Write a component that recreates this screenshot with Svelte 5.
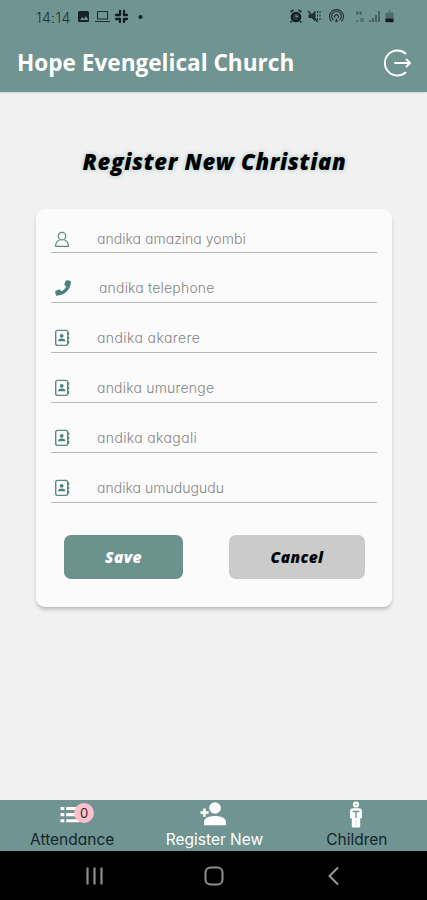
<script>
  const fields = [
    { icon: 'user', hint: 'andika amazina yombi', spacing: 0.03 },
    { icon: 'phone', hint: 'andika telephone', spacing: 0.18 },
    { icon: 'book', hint: 'andika akarere', spacing: 0.4 },
    { icon: 'book', hint: 'andika umurenge', spacing: 0.2 },
    { icon: 'book', hint: 'andika akagali', spacing: 0.36 },
    { icon: 'book', hint: 'andika umudugudu', spacing: 0.03 }
  ];
</script>

<div class="screen">
  <div class="status">
    <span class="time">14:14</span>
    <svg width="70" height="16" viewBox="0 0 70 16" fill="none" stroke="#1c3033">
      <rect x="1" y="3" width="11" height="11" rx="1.5" fill="#142326" stroke="none" />
      <path d="M3 12l2.300-3 1.700 2 2-3 2.300 4z" fill="#6f9491" stroke="none" />
      <path d="M20.500 3.500h10v7.500h-10zM18 13.500h15" stroke-width="1.100" />
      <path d="M43 3v4M47 3v4M39 7h4M47 7h3M39 11h4M47 11h3M43 11v3M47 11v3" stroke="#101d20" stroke-width="2.300" stroke-linecap="round" />
      <circle cx="63.500" cy="9" r="2.100" fill="#142326" stroke="none" />
    </svg>
    <svg class="right" width="107" height="16" viewBox="0 0 107 16" fill="none" stroke="#1c3033">
      <circle cx="7" cy="9" r="4.300" fill="#24383a" stroke="#101d20" stroke-width="2" />
      <path d="M1.500 4l3-2M12.500 4l-3-2M3 13l-1.500 1.500M11 13l1.500 1.500" stroke-width="1.700" />
      <path d="M7 6.500V9l2.500-1" stroke="#6f9491" />
      <path d="M19.500 6.500h3l4-4v11l-4-3.500h-3z" fill="#1c3033" stroke="none" />
      <path d="M19 3l10 11" stroke-width="1.300" />
      <path d="M28.500 3v10M31 3v10" stroke-dasharray="2 1.500" />
      <path d="M42.500 13.500a7 7 0 1 1 10 0M44.500 12a4.800 4.800 0 1 1 6 0M46 10a2 2 0 1 1 3 0" stroke-width="1.100" />
      <path d="M46 14l1.500-4 1.500 4z" fill="#1c3033" stroke="none" />
      <path d="M68 3v4M72 3v4M68 5h4M68 12v2M72 10v4M74 10v4" opacity=".65" />
      <path d="M81 14v-2M84 14v-4M87 14V7M90 14V3" stroke-width="1.300" opacity=".75" />
      <path d="M97 5h7v9h-7zM99 3h3" fill="#4c6c6b" stroke="#4c6c6b" />
      <path d="M96.500 10.500h8V14h-8z" fill="#101d20" stroke="none" />
    </svg>
  </div>

  <header>
    <h1>Hope Evengelical Church</h1>
    <svg width="30" height="30" viewBox="0 0 30 30" fill="none" stroke="#fff" stroke-width="1.900" stroke-linecap="round" stroke-linejoin="round">
      <path d="M22.500 5.500A12.500 12.500 0 1 0 22.500 24.500M12 15h15M23.500 11.500l3.500 3.500-3.500 3.500" />
    </svg>
  </header>

  <main>
    <h2>Register New Christian</h2>
    <section class="card">
      {#each fields as f}
        <div class="field" class:first={f.icon === 'user'}>
          {#if f.icon === 'user'}
            <svg width="16" height="17" viewBox="0 0 16 18" fill="none" stroke="#5a8a84" stroke-width="1.300">
              <circle cx="8" cy="5.500" r="4" />
              <path d="M5.500 9.500C2.500 10.500 1.200 12.500 1.200 16.200h13.600c0-3.700-1.300-5.700-4.300-6.700" stroke-linejoin="round" />
            </svg>
          {:else if f.icon === 'phone'}
            <svg width="18" height="18" viewBox="0 0 18 18" fill="#4d827c">
              <path d="M12.800 1.200l3.300.6c.5.100.8.500.8 1C16.900 10.500 10.500 16.700 2.800 16.700c-.5 0-.9-.3-1-.8l-.6-3c-.1-.5.100-.9.600-1.100l3.200-1.300c.4-.2.800-.1 1.100.3l1.300 1.500c2.200-1 3.900-2.700 4.800-4.800l-1.500-1.300c-.3-.3-.4-.7-.3-1.100l1.300-3.400c.2-.4.600-.6 1.100-.5z" />
            </svg>
          {:else}
            <svg width="16" height="18" viewBox="0 0 16 18" fill="#4d827c">
              <rect x="1.700" y="1.400" width="12" height="15" rx="1.800" fill="none" stroke="#5a8a84" stroke-width="1.400" />
              <path d="M13.500 3.500h1.700v2.500h-1.700zM13.500 7.700h1.700v2.500h-1.700zM13.500 12h1.700v2.500h-1.700z" />
              <circle cx="7.700" cy="6.800" r="1.900" />
              <path d="M4 12.300c0-2 1.200-2.800 3.700-2.800s3.700.8 3.700 2.800z" />
            </svg>
          {/if}
          <span style:letter-spacing="{f.spacing}px">{f.hint}</span>
        </div>
      {/each}
      <div class="actions">
        <button class="save">Save</button>
        <button class="cancel">Cancel</button>
      </div>
    </section>
  </main>

  <nav>
    <div class="tab att">
      <div class="ico">
        <svg width="20" height="17" viewBox="0 0 20 18" fill="#fff">
          <path d="M0 1h4v3.300H0zM0 7.500h4v3.300H0zM0 14h4v3.300H0zM6 1h14v3.300H6zM6 7.500h14v3.300H6zM6 14h14v3.300H6z" />
        </svg>
        <b class="badge">0</b>
      </div>
      <span>Attendance</span>
    </div>
    <div class="tab reg">
      <div class="ico">
        <svg width="26" height="24" viewBox="0 0 26 24" fill="#fff">
          <circle cx="15" cy="6" r="5.800" />
          <path d="M4 23.300V20c0-4 5-6 11-6s11 2 11 6v3.300zM3.200 6.500h2.600v2.800h2.800v2.600H5.800v2.800H3.200v-2.800H.500V9.300h2.700z" />
        </svg>
      </div>
      <span>Register New</span>
    </div>
    <div class="tab chi">
      <div class="ico">
        <svg width="14" height="27" viewBox="0 0 14 27" fill="#fff">
          <circle cx="7" cy="3.500" r="3.100" />
          <path d="M4 7.200h6c2 0 3 1.200 3 3v5.800c0 1.300-1 1.600-1.800 1.600V25c0 1-.6 1.500-1.500 1.500H4.300c-.9 0-1.500-.5-1.500-1.500v-7.400C2 17.600 1 17.300 1 16v-5.800c0-1.800 1-3 3-3z" />
          <path d="M3.500 10.500h7M7 10.500v6.500" fill="none" stroke="#6f9491" stroke-width="1.300" />
          <path d="M7 19v6" stroke="#c3d2d0" stroke-width=".8" />
          <circle cx="7" cy="3.500" r="1" fill="#8daeab" />
        </svg>
      </div>
      <span>Children</span>
    </div>
  </nav>

  <div class="system">
    <svg width="20" height="20" viewBox="0 0 20 20" stroke="#8d8d8d" stroke-width="2.200"><path d="M3.500 1.500v17M10.500 1.500v17M17.500 1.500v17" /></svg>
    <svg width="20" height="20" viewBox="0 0 20 20" fill="none" stroke="#8f8f8f" stroke-width="2"><rect x="1.500" y="1.500" width="17" height="17" rx="5" /></svg>
    <svg width="20" height="20" viewBox="0 0 20 20" fill="none" stroke="#999" stroke-width="2"><path d="M14 1.500L5.500 10l8.500 8.500" /></svg>
  </div>
</div>

<style>
  :global(body) { margin: 0; }
  .screen {
    width: 427px;
    height: 900px;
    display: flex;
    flex-direction: column;
    background: #f1f1f1;
    font-family: "Open Sans", "Noto Sans", sans-serif;
    overflow: hidden;
  }
  svg { display: block; flex: none; }
  .status {
    height: 34px;
    box-sizing: border-box;
    padding: 8px 31px 0 36px;
    display: flex;
    background: #6f9491;
  }
  .time {
    width: 41px;
    font: 300 14px/19px Inter, sans-serif;
    letter-spacing: 0.4px;
    color: #1c3033;
  }
  .right { margin-left: auto; }
  header {
    height: 58px;
    box-sizing: border-box;
    padding: 0 14px 0 17px;
    display: flex;
    align-items: center;
    justify-content: space-between;
    background: #6f9491;
    box-shadow: 0 1px 2px rgba(0, 0, 0, 0.12);
  }
  h1 {
    margin: 0;
    font-size: 22.600px;
    line-height: 30px;
    font-weight: 700;
    color: #fff;
    white-space: nowrap;
  }
  main { flex: 1; }
  h2 {
    margin: 53px 0 0;
    text-align: center;
    font-size: 22px;
    line-height: 32px;
    font-weight: 800;
    font-style: italic;
    letter-spacing: 0.65px;
    text-indent: 2px;
    color: #000;
    white-space: nowrap;
    text-shadow: 0 0 5px #9fc2bd;
  }
  .card {
    width: 356px;
    height: 398px;
    box-sizing: border-box;
    margin: 32px 0 0 36px;
    padding: 0 15px;
    border-radius: 9px;
    background: #fbfbfb;
    box-shadow: 0 3px 4px -1px rgba(0, 0, 0, 0.26);
  }
  .field {
    height: 50px;
    box-sizing: border-box;
    border-bottom: 1px solid #b8b8b8;
    display: flex;
    align-items: flex-end;
    padding: 0 0 5px 3px;
    gap: 27px;
  }
  .field.first { height: 44px; padding-bottom: 4px; }
  .field span {
    font: 300 14px/18px Inter, sans-serif;
    font-feature-settings: "cv11";
    color: #858585;
    white-space: nowrap;
  }
  .actions {
    display: flex;
    justify-content: space-between;
    padding: 32px 12px 0 13px;
  }
  button {
    height: 44px;
    border: 0;
    border-radius: 7px;
    padding: 0;
    font: italic 800 15.500px/20px "Open Sans", sans-serif;
    letter-spacing: 0.4px;
  }
  .save { width: 119px; background: #6b928d; color: #fff; }
  .cancel { width: 136px; background: #cbcbcb; color: #000; }
  nav {
    height: 51px;
    display: flex;
    background: #6f9491;
  }
  .tab {
    width: 33.333%;
    display: flex;
    flex-direction: column;
    align-items: center;
  }
  .ico {
    position: relative;
    height: 28px;
    display: flex;
    align-items: center;
  }
  .tab span {
    font: 400 15.500px/23px Inter, sans-serif;
    font-feature-settings: "cv11";
    color: #14262a;
    white-space: nowrap;
    padding-left: 2px;
  }
  .reg span { color: #fff; }
  .att .ico { margin-left: -2px; }
  .badge {
    position: absolute;
    left: 14px;
    top: 3px;
    width: 20px;
    height: 20px;
    border-radius: 50%;
    background: #ffc0cb;
    text-align: center;
    font: 400 13px/20px Inter, sans-serif;
    color: #2b2b2b;
  }
  .system {
    height: 49px;
    box-sizing: border-box;
    padding: 0 83px 0 84px;
    display: flex;
    align-items: center;
    justify-content: space-between;
    background: #000;
  }
</style>
